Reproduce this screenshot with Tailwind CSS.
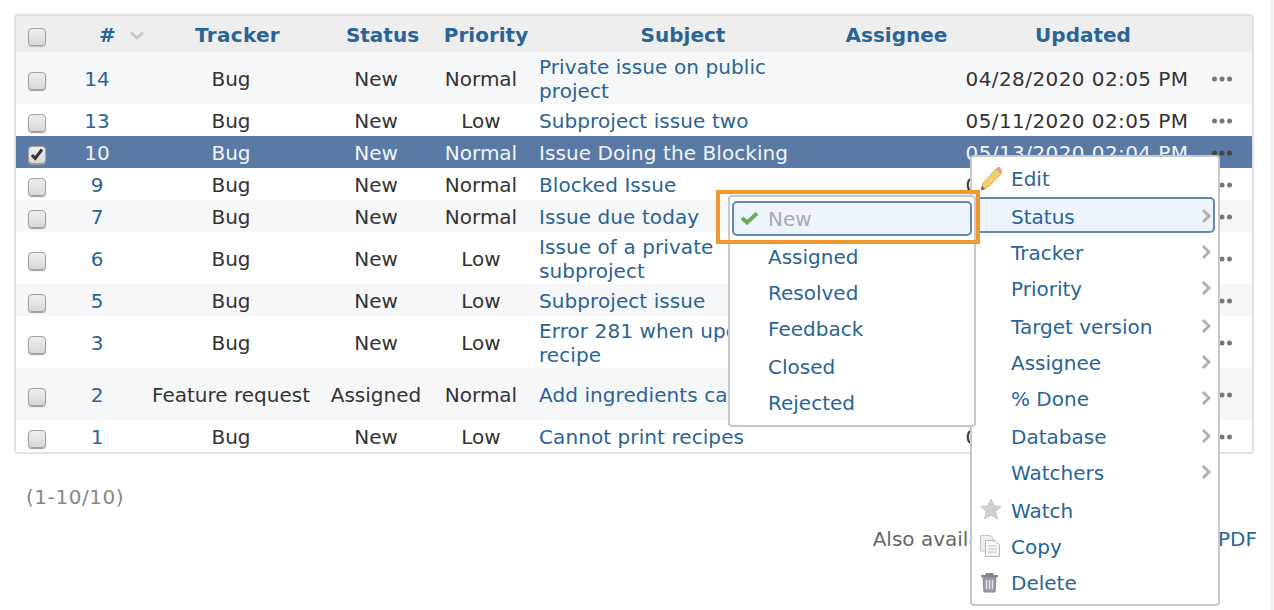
<!DOCTYPE html>
<html lang="en">
<head>
  <meta charset="UTF-8" />
  <title>Issues</title>
  <script src="https://cdn.jsdelivr.net/npm/@tailwindcss/browser@4"></script>
</head>
<body class="bg-white h-[610px] overflow-hidden relative font-['DejaVu_Sans',sans-serif] text-[20px] leading-[24px] text-[#333]">

  <!-- Page edge line on the right -->
  <div class="absolute right-[1px] top-0 bottom-0 w-[2px] bg-[#eeeeee]"></div>

  <main class="pl-[14px] pt-[14px] w-[1254px]">
    <!-- Issue list -->
    <div class="border-2 border-[#e2e2e2] rounded-[4px] overflow-hidden">
      <table class="w-full table-fixed border-collapse text-center">
        <colgroup>
          <col class="w-[42px]" /><col class="w-[78px]" /><col class="w-[185px]" /><col class="w-[110px]" /><col class="w-[100px]" /><col class="w-[304px]" /><col class="w-[123px]" /><col class="w-[238px]" /><col />
        </colgroup>
        <thead>
          <tr class="h-[36px] bg-[#eeeeee] text-[#2a6496]">
            <th class="p-0 align-middle"><span class="flex justify-center pt-[5px]"><span class="block w-[18px] h-[18px] rounded-[4px] border border-[#a0a0a0] bg-linear-to-b from-[#eeeeee] to-[#d8d8d8] shadow-[0_1px_1px_#bbb]"></span></span></th>
            <th class="p-0 pt-[2px] font-bold">
              <span class="flex items-center gap-[13px] pl-[41px] whitespace-nowrap">#
                <svg class="shrink-0" width="16" height="9" viewBox="0 0 16 9"><path d="M2 1.5 L8 7 L14 1.5" fill="none" stroke="#c8c8c8" stroke-width="3"/></svg>
              </span>
            </th>
            <th class="p-0 pt-[2px] pl-[18px] font-bold tracking-[0.3px]">Tracker</th>
            <th class="p-0 pt-[2px] pl-[13px] font-bold">Status</th>
            <th class="p-0 pt-[2px] pl-[10px] font-bold">Priority</th>
            <th class="p-0 pt-[2px] font-bold">Subject</th>
            <th class="p-0 pt-[2px] font-bold">Assignee</th>
            <th class="p-0 pt-[2px] pl-[12px] font-bold">Updated</th>
            <th class="p-0"></th>
          </tr>
        </thead>
        <tbody id="issueRows"></tbody>
      </table>
    </div>

    <p class="mt-[31px] ml-[12px] text-[#888] tracking-[0.55px]">(1-10/10)</p>
    <p class="mt-[18px] text-right text-[#666] -mr-[3px]"><span class="mr-[37px]">Also available in:</span> <span class="text-[#2a6496]">Atom</span> | <span class="text-[#2a6496]">CSV</span> | <span class="text-[#2a6496]">PDF</span></p>
  </main>

  <!-- Context menu -->
  <div class="absolute left-[970px] top-[155px] w-[250px] h-[451px] bg-white border-2 border-[#c8c8c8] rounded-[4px] pt-[4px] text-[#2a6496]">
    <div class="h-[36px] flex items-center pl-[39px] relative">
      <svg class="absolute left-[7px] top-[5px]" width="24" height="26" viewBox="0 0 24 26">
        <path d="M17 3 L22 8 L8 22 L2 24 L4 17 Z" fill="#f2cf73" stroke="#d8b060" stroke-width="1"/>
        <path d="M17 3 L19 1 Q20 0.5 21 1.5 L23 4 Q23.5 5 23 6 L22 8 Z" fill="#e8989c"/>
        <path d="M2 24 L3 20 L6 23 Z" fill="#6b5a3a"/>
      </svg>
      Edit
    </div>
    <div class="h-[36px] mt-[2px] flex items-center pl-[39px] relative">
      <span class="absolute left-[2px] right-[3px] top-[-2px] h-[36px] bg-[#eef4fb] border-2 border-[#6388b4] rounded-[5px]"></span>
      <span class="relative">Status</span>
      <svg class="absolute left-[229px] top-[9px]" width="10" height="16" viewBox="0 0 10 16"><path d="M2 2 L8 8 L2 14" fill="none" stroke="#b0b0b0" stroke-width="3"/></svg>
    </div>
    <div class="h-[36px] flex items-center pl-[39px] relative">Tracker<svg class="absolute left-[229px] top-[9px]" width="10" height="16" viewBox="0 0 10 16"><path d="M2 2 L8 8 L2 14" fill="none" stroke="#b0b0b0" stroke-width="3"/></svg></div>
    <div class="h-[36px] flex items-center pl-[39px] relative">Priority<svg class="absolute left-[229px] top-[9px]" width="10" height="16" viewBox="0 0 10 16"><path d="M2 2 L8 8 L2 14" fill="none" stroke="#b0b0b0" stroke-width="3"/></svg></div>
    <div class="h-[36px] mt-[2px] flex items-center pl-[39px] relative">Target version<svg class="absolute left-[229px] top-[9px]" width="10" height="16" viewBox="0 0 10 16"><path d="M2 2 L8 8 L2 14" fill="none" stroke="#b0b0b0" stroke-width="3"/></svg></div>
    <div class="h-[36px] flex items-center pl-[39px] relative">Assignee<svg class="absolute left-[229px] top-[9px]" width="10" height="16" viewBox="0 0 10 16"><path d="M2 2 L8 8 L2 14" fill="none" stroke="#b0b0b0" stroke-width="3"/></svg></div>
    <div class="h-[36px] flex items-center pl-[39px] relative">% Done<svg class="absolute left-[229px] top-[9px]" width="10" height="16" viewBox="0 0 10 16"><path d="M2 2 L8 8 L2 14" fill="none" stroke="#b0b0b0" stroke-width="3"/></svg></div>
    <div class="h-[36px] mt-[2px] flex items-center pl-[39px] relative">Database<svg class="absolute left-[229px] top-[9px]" width="10" height="16" viewBox="0 0 10 16"><path d="M2 2 L8 8 L2 14" fill="none" stroke="#b0b0b0" stroke-width="3"/></svg></div>
    <div class="h-[36px] flex items-center pl-[39px] relative">Watchers<svg class="absolute left-[229px] top-[9px]" width="10" height="16" viewBox="0 0 10 16"><path d="M2 2 L8 8 L2 14" fill="none" stroke="#b0b0b0" stroke-width="3"/></svg></div>
    <div class="h-[36px] mt-[2px] flex items-center pl-[39px] relative">
      <svg class="absolute left-[8px] top-[5px]" width="22" height="22" viewBox="0 0 22 22"><path d="M11 1 L14 8 L21 8.6 L15.6 13.4 L17.4 21 L11 17 L4.6 21 L6.4 13.4 L1 8.6 L8 8 Z" fill="#d0d0d0" stroke="#c4c4c4"/></svg>
      Watch
    </div>
    <div class="h-[36px] flex items-center pl-[39px] relative">
      <svg class="absolute left-[7px] top-[5px]" width="22" height="24" viewBox="0 0 22 24">
        <path d="M1.5 1.5 H11 L14 4 V17 H1.5 Z" fill="#efefef" stroke="#c4c4c4"/>
        <path d="M6.5 6.5 H16 L20.5 11 V22.5 H6.5 Z" fill="#f6f6f6" stroke="#b4b4b4"/>
        <path d="M9 12 H17 M9 15 H18 M9 18 H18" stroke="#c0c0c0"/>
      </svg>
      Copy
    </div>
    <div class="h-[36px] flex items-center pl-[39px] relative">
      <svg class="absolute left-[8px] top-[7px]" width="19" height="21" viewBox="0 0 19 21">
        <path d="M1 4 H18 M6.5 4 V2 H12.5 V4" fill="none" stroke="#85858f" stroke-width="2"/>
        <path d="M3 5 H16 L15 20 H4 Z" fill="#9c9ca6" stroke="#85858f"/>
        <path d="M6.5 8 V17 M9.5 8 V17 M12.5 8 V17" stroke="#e4e4e8" stroke-width="1.4"/>
      </svg>
      Delete
    </div>
  </div>

  <!-- Status submenu -->
  <div class="absolute left-[728px] top-[195px] w-[248px] h-[232px] bg-white border-2 border-[#c8c8c8] rounded-[4px] pt-[4px] text-[#2a6496]">
    <div class="h-[36px] flex items-center pl-[38px] relative">
      <span class="absolute left-[2px] right-[2px] top-0 h-[35px] bg-[#eef4fb] border-2 border-[#6388b4] rounded-[5px]"></span>
      <svg class="absolute left-[10px] top-[10px]" width="19" height="14" viewBox="0 0 19 14"><path d="M2 7 L7 11.5 L17 2.5" fill="none" stroke="#6cae55" stroke-width="4"/></svg>
      <span class="relative text-[#aaaaaa]">New</span>
    </div>
    <div class="h-[36px] mt-[2px] flex items-center pl-[38px]">Assigned</div>
    <div class="h-[36px] flex items-center pl-[38px]">Resolved</div>
    <div class="h-[36px] flex items-center pl-[38px]">Feedback</div>
    <div class="h-[36px] mt-[2px] flex items-center pl-[38px]">Closed</div>
    <div class="h-[36px] flex items-center pl-[38px]">Rejected</div>
  </div>

  <!-- Orange callout round the first submenu item -->
  <div class="absolute left-[716px] top-[190px] w-[264px] h-[54px] border-[4px] border-[#f0982f]"></div>

  <script>
    const issues = [
      { id: 14, tracker: 'Bug', status: 'New', priority: 'Normal', subject: 'Private issue on public project', updated: '04/28/2020 02:05 PM', tall: true, shade: true },
      { id: 13, tracker: 'Bug', status: 'New', priority: 'Low', subject: 'Subproject issue two', updated: '05/11/2020 02:05 PM' },
      { id: 10, tracker: 'Bug', status: 'New', priority: 'Normal', subject: 'Issue Doing the Blocking', updated: '05/13/2020 02:04 PM', selected: true },
      { id: 9, tracker: 'Bug', status: 'New', priority: 'Normal', subject: 'Blocked Issue', updated: '05/13/2020 02:04 PM' },
      { id: 7, tracker: 'Bug', status: 'New', priority: 'Normal', subject: 'Issue due today', updated: '05/13/2020 02:04 PM', shade: true },
      { id: 6, tracker: 'Bug', status: 'New', priority: 'Low', subject: 'Issue of a private subproject', updated: '05/11/2020 02:05 PM', tall: true },
      { id: 5, tracker: 'Bug', status: 'New', priority: 'Low', subject: 'Subproject issue', updated: '05/11/2020 02:05 PM', shade: true },
      { id: 3, tracker: 'Bug', status: 'New', priority: 'Low', subject: 'Error 281 when updating a recipe', updated: '05/11/2020 02:05 PM', tall: true },
      { id: 2, tracker: 'Feature request', status: 'Assigned', priority: 'Normal', subject: 'Add ingredients categories', updated: '05/11/2020 02:05 PM', tall: true, shade: true },
      { id: 1, tracker: 'Bug', status: 'New', priority: 'Low', subject: 'Cannot print recipes', updated: '05/11/2020 02:05 PM' },
    ];

    const tick = '<svg width="14" height="13" viewBox="0 0 14 13"><path d="M2 7 L5.2 10.5 L12 1.5" fill="none" stroke="#333" stroke-width="3"/></svg>';

    document.getElementById('issueRows').innerHTML = issues.map(row => {
      const height = row.tall ? 'h-[52px]' : 'h-[32px]';
      const tone = row.selected ? 'bg-[#5a7aa6] text-[#f2f5f9]' : row.shade ? 'bg-[#f6f7f9]' : 'bg-white';
      const link = row.selected ? '' : 'text-[#2a6496]';
      const dot = row.selected ? '#444' : '#777';
      return `
        <tr class="${height} ${tone}">
          <td class="p-0"><span class="flex justify-center pt-[5px]"><span class="flex items-center justify-center w-[18px] h-[18px] rounded-[4px] border border-[#a0a0a0] bg-linear-to-b from-[#eeeeee] to-[#d8d8d8] shadow-[0_1px_1px_#999]">${row.selected ? tick : ''}</span></span></td>
          <td class="p-0 pt-[2px] ${link}">${row.id}</td>
          <td class="p-0 pt-[2px] pl-[5px] whitespace-nowrap">${row.tracker}</td>
          <td class="p-0 pt-[2px]">${row.status}</td>
          <td class="p-0 pt-[2px]">${row.priority}</td>
          <td class="p-0 pt-[2px] pl-[8px] pr-[24px] text-left tracking-[0.08px] ${link}">${row.subject}</td>
          <td class="p-0"></td>
          <td class="p-0 pt-[2px] whitespace-nowrap tracking-[0.42px]">${row.updated}</td>
          <td class="p-0 pt-[2px]"><svg class="ml-[15px]" width="22" height="6" viewBox="0 0 22 6"><circle cx="3.5" cy="3" r="2.5" fill="${dot}"/><circle cx="11" cy="3" r="2.5" fill="${dot}"/><circle cx="18.5" cy="3" r="2.5" fill="${dot}"/></svg></td>
        </tr>`;
    }).join('');
  </script>
</body>
</html>
